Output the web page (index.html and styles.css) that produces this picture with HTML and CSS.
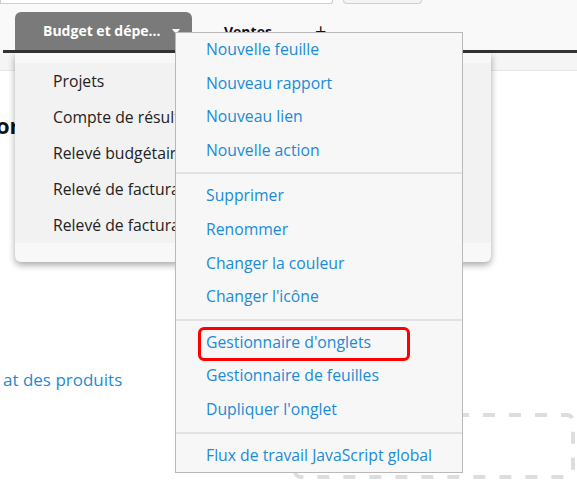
FILE: index.html
```html
<!DOCTYPE html>
<html lang="fr">
<head>
<meta charset="utf-8">
<link rel="stylesheet" href="styles.css">
</head>
<body>
<div class="page">
  <div class="top">
    <div class="search"></div>
    <div class="btn"></div>
  </div>
  <div class="tabbar">
    <div class="tabs">
      <div class="tab active"><span>Budget et dépe...</span><span class="caret"></span></div>
      <div class="tab plain">Ventes</div>
      <div class="tab add">+</div>
    </div>
  </div>
  <div class="sheethead"></div>
  <div class="content">
    <div class="title">or</div>
    <div class="link">at des produits</div>
    <div class="drop">
      <svg width="282" height="66" viewBox="0 0 282 66"><rect x="2" y="2" width="278" height="62" rx="6" fill="none" stroke="#dddddd" stroke-width="4" stroke-dasharray="12 14"/></svg>
    </div>
  </div>

  <div class="tabmenu">
    <ul class="tablist">
      <li>Projets</li>
      <li>Compte de résultat</li>
      <li>Relevé budgétaire</li>
      <li>Relevé de facturation</li>
      <li>Relevé de facturation</li>
    </ul>
  </div>

  <div class="ctxmenu">
    <ul class="group">
      <li>Nouvelle feuille</li>
      <li>Nouveau rapport</li>
      <li>Nouveau lien</li>
      <li>Nouvelle action</li>
    </ul>
    <div class="sep"></div>
    <ul class="group">
      <li>Supprimer</li>
      <li>Renommer</li>
      <li>Changer la couleur</li>
      <li>Changer l'icône</li>
    </ul>
    <div class="sep"></div>
    <ul class="group">
      <li class="marked">Gestionnaire d'onglets<span class="highlight"></span></li>
      <li>Gestionnaire de feuilles</li>
      <li>Dupliquer l'onglet</li>
    </ul>
    <div class="sep"></div>
    <ul class="group">
      <li>Flux de travail JavaScript global</li>
    </ul>
  </div>
</div>
</body>
</html>
```

FILE: styles.css
```css
* { box-sizing: border-box; }
html, body {
  margin: 0;
  padding: 0;
  background: #ffffff;
  font-family: "Open Sans", "Noto Sans", sans-serif;
}
.page {
  position: relative;
  width: 577px;
  height: 487px;
  overflow: hidden;
  background: #ffffff;
}
.top {
  display: flex;
  align-items: flex-start;
  height: 12px;
  background: #f9f9f9;
}
.search {
  width: 333px;
  height: 4px;
  border: 1px solid #cfcfcf;
  border-top: none;
  border-radius: 0 0 3px 0;
  background: #ffffff;
}
.btn {
  margin-left: 10px;
  width: 79px;
  height: 4px;
  border: 1px solid #cfcfcf;
  border-top: none;
  border-radius: 0 0 4px 4px;
  background: #f4f4f4;
}
.tabbar {
  background: #f9f9f9;
  padding-left: 3px;
}
.tabs {
  display: flex;
  align-items: stretch;
  height: 41px;
  padding-left: 12px;
  border-bottom: 3px solid #333333;
}
.tab {
  display: flex;
  align-items: center;
  font-size: 14px;
  font-weight: 700;
}
.tab.active {
  width: 177px;
  padding-left: 28px;
  padding-bottom: 2px;
  background: #7a7a7a;
  color: #ffffff;
  border-radius: 6px 6px 0 0;
}
.caret {
  width: 0;
  height: 0;
  margin-left: 11px;
  margin-top: 3px;
  border-left: 4px solid transparent;
  border-right: 4px solid transparent;
  border-top: 5px solid #ffffff;
}
.tab.plain {
  margin-left: 32px;
  color: #111111;
  padding-top: 1px;
}
.tab.add {
  margin-left: 43px;
  font-size: 20px;
  font-weight: 400;
  color: #111111;
  padding-bottom: 2px;
}
.sheethead {
  height: 18px;
  background: #f5f5f5;
  border-bottom: 1px solid #e6e6e6;
}
.content {
  display: flex;
  flex-direction: column;
  align-items: flex-start;
}
.title {
  margin-top: 39px;
  margin-left: -4px;
  font-size: 22px;
  line-height: 30px;
  font-weight: 700;
  color: #111111;
}
.link {
  margin-top: 228px;
  margin-left: 3px;
  font-size: 17px;
  line-height: 24px;
  color: #1f8ad2;
}
.drop {
  margin-top: 21px;
  margin-left: 293px;
  width: 282px;
  height: 66px;
}
.drop svg { display: block; }

.tabmenu {
  position: absolute;
  left: 15px;
  top: 53px;
  width: 476px;
  height: 209px;
  padding: 10px 0 19px;
  background: #f8f8f8;
  border-radius: 0 0 6px 6px;
  box-shadow: 0 3px 7px rgba(0, 0, 0, 0.35);
}
.tablist {
  list-style: none;
  margin: 0;
  padding: 0;
  background: #f2f2f2;
}
.tablist li {
  height: 36px;
  line-height: 36px;
  padding-left: 38px;
  font-size: 15.75px;
  color: #222222;
  white-space: nowrap;
}

.ctxmenu {
  position: absolute;
  left: 175px;
  top: 32px;
  width: 288px;
  height: 441px;
  background: #f7f7f7;
  border: 1px solid #b9b9b9;
}
.group {
  list-style: none;
  margin: 0;
  padding: 0;
}
.group li {
  position: relative;
  height: 33.6px;
  line-height: 33.6px;
  padding-left: 30px;
  font-size: 15.75px;
  color: #208bd4;
  white-space: nowrap;
}
.sep {
  height: 2px;
  margin: 5px 0;
  background: #e2e2e2;
}
.highlight {
  position: absolute;
  left: 22px;
  top: 1px;
  width: 212px;
  height: 34px;
  border: 3px solid #ff0000;
  border-radius: 6px;
}
```
